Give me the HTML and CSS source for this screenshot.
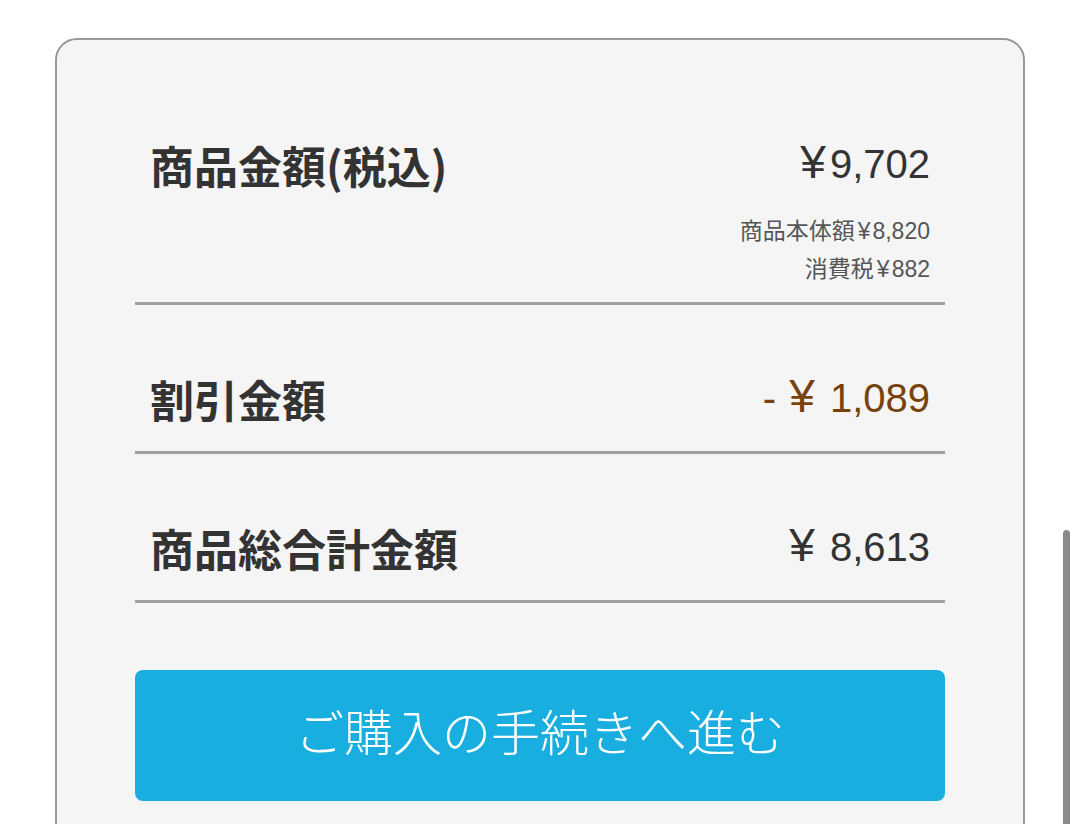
FILE: index.html
```html
<!DOCTYPE html>
<html lang="ja">
<head>
<meta charset="utf-8">
<title>商品金額</title>
<link rel="stylesheet" href="styles.css">
</head>
<body>
<div class="page">
  <section class="card">
    <div class="row row-first">
      <div class="row-main">
        <span class="label">商品金額(税込)</span>
        <span class="price"><span class="yen">¥</span>9,702</span>
      </div>
      <div class="breakdown">
        <div>商品本体額<span class="yen-s">¥</span>8,820</div>
        <div>消費税<span class="yen-s">¥</span>882</div>
      </div>
    </div>
    <div class="row">
      <div class="row-main">
        <span class="label">割引金額</span>
        <span class="price discount">- <span class="yen">¥</span> 1,089</span>
      </div>
    </div>
    <div class="row">
      <div class="row-main">
        <span class="label">商品総合計金額</span>
        <span class="price"><span class="yen">¥</span> 8,613</span>
      </div>
    </div>
    <button class="checkout">ご購入の手続きへ進む</button>
  </section>
  <div class="scrollbar"></div>
</div>
</body>
</html>
```
FILE: styles.css
```css
html, body {
  margin: 0;
  padding: 0;
  background: #ffffff;
  overflow: hidden;
  height: 824px;
}
.page {
  position: relative;
  height: 824px;
  padding-top: 38px;
  box-sizing: border-box;
}
.card {
  margin-left: 55px;
  width: 970px;
  box-sizing: border-box;
  min-height: 900px;
  background: #f5f5f5;
  border: 2px solid #999999;
  border-radius: 22px;
  padding: 31px 78px 0;
  font-family: "Noto Sans CJK JP", "Liberation Sans", sans-serif;
  color: #333333;
}
.row {
  border-bottom: 3px solid #a0a0a0;
  padding: 70px 15px 28px;
}
.row-first {
  padding-bottom: 14px;
}
.row-main {
  display: flex;
  justify-content: space-between;
  align-items: center;
  height: 48px;
}
.label {
  font-size: 44px;
  font-weight: 700;
  line-height: 48px;
  color: #333333;
}
.price {
  font-family: "Liberation Sans", "Noto Sans CJK JP", sans-serif;
  font-size: 40px;
  line-height: 48px;
  color: #333333;
  margin-top: -4px;
}
.yen {
  font-size: 46px;
  line-height: 1;
  margin: 0 4px 0 2px;
}
.discount {
  color: #78420e;
}
.breakdown {
  margin-top: 23px;
  text-align: right;
  font-family: "Liberation Sans", "Noto Sans CJK JP", sans-serif;
  font-size: 23px;
  line-height: 38px;
  color: #555555;
}
.yen-s {
  margin: 0 2px 0 3px;
}
.checkout {
  display: block;
  width: 100%;
  height: 131px;
  margin-top: 67px;
  border: none;
  border-radius: 8px;
  background: #19aee0;
  color: #ffffff;
  font-family: "Noto Sans CJK JP", sans-serif;
  font-weight: 300;
  font-size: 49px;
  padding: 0 0 12px;
}
.scrollbar {
  position: absolute;
  left: 1063px;
  top: 530px;
  width: 7px;
  height: 320px;
  border-radius: 4px;
  background: #8a8a8a;
}
```
